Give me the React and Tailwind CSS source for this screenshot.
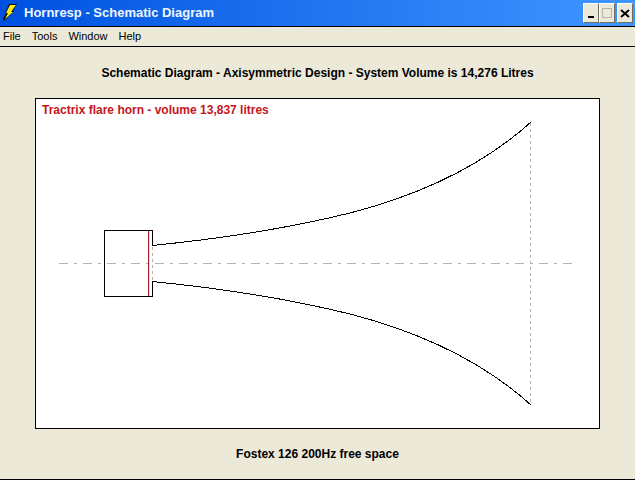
const menus = ['File', 'Tools', 'Window', 'Help']

const captionButton =
  'flex h-5 w-4 items-center justify-center border border-t-white border-l-white border-r-[#716f64] border-b-[#716f64] bg-[#ece9d8]'

function BoltIcon() {
  return (
    <svg className="h-5 w-4" viewBox="0 0 16 20" aria-hidden="true">
      <path d="M7 1H15L11 8H12L2 18L1 16L4 10H3Z" fill="#101010" />
      <path d="M8 2H14L9 9H11L3 16L6 10H4Z" fill="#f7f01e" />
    </svg>
  )
}

function TitleBar() {
  return (
    <header className="flex h-[27px] items-center border-b border-black bg-linear-to-r from-[#0050e0] to-[#3f96ff] px-0.5">
      <BoltIcon />
      <h1 className="ml-1.5 flex-1 text-[13px] leading-4 font-bold whitespace-nowrap text-[#eef6ff]">
        Hornresp - Schematic Diagram
      </h1>
      <button type="button" aria-label="Minimize" className={captionButton}>
        <svg className="h-3 w-3 shrink-0" viewBox="0 0 12 12">
          <path d="M3 10H9" stroke="#000" strokeWidth="2" />
        </svg>
      </button>
      <button type="button" aria-label="Maximize" className={captionButton} disabled>
        <svg className="h-3 w-3 shrink-0" viewBox="0 0 12 12">
          <path d="M1 1.5H11M1.5 1V11M10.5 1V11M1 10.5H11" stroke="#b5b2a4" />
        </svg>
      </button>
      <button type="button" aria-label="Close" className={`${captionButton} ml-0.5`}>
        <svg className="h-3 w-3 shrink-0" viewBox="0 0 12 12">
          <path d="M2 3L10 10M10 3L2 10" stroke="#000" strokeWidth="2" />
        </svg>
      </button>
    </header>
  )
}

function MenuBar() {
  return (
    <nav className="flex h-5 items-center gap-[11px] border-b border-black pb-0.5 pl-[3px]">
      {menus.map((name) => (
        <button key={name} type="button" className="text-[11px] leading-4">
          {name}
        </button>
      ))}
    </nav>
  )
}

function HornDrawing() {
  return (
    <svg
      className="block w-full"
      viewBox="0 0 563 309"
      fill="none"
      shapeRendering="crispEdges"
      role="img"
      aria-label="Axisymmetric horn section"
    >
      {/* axis, throat and mouth */}
      <path d="M23 144.5H537" stroke="#b4b4b4" strokeDasharray="9 6 3 6" />
      <path d="M116.5 128V162" stroke="#c9a9a9" strokeDasharray="3 3" />
      <path d="M494.5 4V285" stroke="#b4b4b4" strokeDasharray="3 3" />

      {/* rear chamber with the driver */}
      <path d="M116.5 126.5V111.5H68.5V177.5H116.5V162.5" stroke="#000" />
      <path d="M113.5 112V177" stroke="#fbd5d5" />
      <path d="M112.5 112V177" stroke="#a02030" />

      {/* flare */}
      <path d="M116 126.5C182 120 249 110 314 94C376 78 443 50 495 3" stroke="#000" />
      <path d="M116 162.5C182 169 249 179 314 195C376 211 443 239 495 286" stroke="#000" />
    </svg>
  )
}

export default function App() {
  return (
    <div className="flex min-h-screen flex-col border-b border-black bg-[#ece9d8] font-['Liberation_Sans',Arial,sans-serif] text-black">
      <TitleBar />
      <MenuBar />
      <main className="flex flex-col px-[35px] pt-[18px] text-center text-[12px] leading-4 font-bold">
        <h2>Schematic Diagram - Axisymmetric Design - System Volume is 14,276 Litres</h2>
        <figure className="mt-[17px]">
          <div className="border border-black bg-white">
            <p className="h-5 pt-[3px] pl-1.5 text-left text-[#c4161c]">
              Tractrix flare horn - volume 13,837 litres
            </p>
            <HornDrawing />
          </div>
          <figcaption className="mt-[17px]">Fostex 126 200Hz free space</figcaption>
        </figure>
      </main>
    </div>
  )
}
